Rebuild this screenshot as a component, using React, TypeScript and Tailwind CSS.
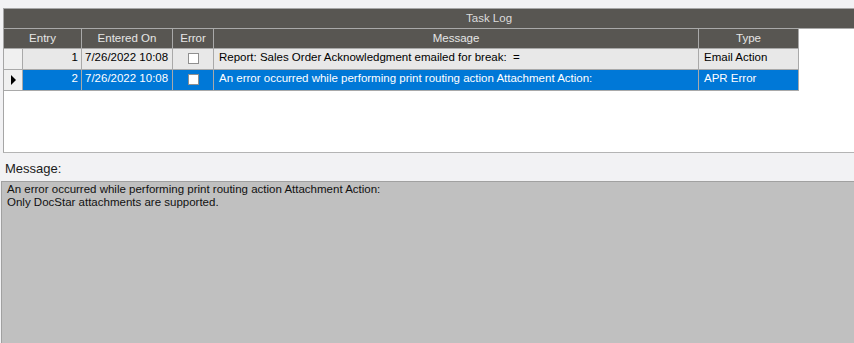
import React from "react";

type Row = {
  entry: number;
  enteredOn: string;
  error: boolean;
  message: string;
  type: string;
};

const rows: Row[] = [
  {
    entry: 1,
    enteredOn: "7/26/2022 10:08",
    error: false,
    message: "Report: Sales Order Acknowledgment emailed for break:  =",
    type: "Email Action",
  },
  {
    entry: 2,
    enteredOn: "7/26/2022 10:08",
    error: false,
    message: "An error occurred while performing print routing action Attachment Action:",
    type: "APR Error",
  },
];

const font = { fontFamily: '"Liberation Sans", Arial, sans-serif' };

export default function App() {
  const selected = 1;

  return (
    <div
      className="w-[854px] h-[343px] overflow-hidden bg-[#f2f2f4] text-[11.5px] text-black flex flex-col"
      style={font}
    >
      {/* Grid panel */}
      <div className="mt-[8px] ml-[3px] h-[145px] shrink-0 bg-white border-t border-l border-b border-[#a6a6a6] border-b-[#b4b4b4] flex flex-col">
        {/* Task Log caption */}
        <div className="h-[20px] shrink-0 bg-[#585652] text-[#dcdcdc] leading-[19px] pl-[462px] border-b border-[#a9a9a9]">
          Task Log
        </div>

        {/* Column headers */}
        <div className="flex shrink-0 h-[20px] w-[795px] bg-[#585652] text-[#e6e6e6] leading-[19px] border-b border-[#a9a9a9] whitespace-nowrap">
          <div className="w-[78px] text-center border-r border-[#a9a9a9]">Entry</div>
          <div className="w-[91px] text-center border-r border-[#a9a9a9]">Entered On</div>
          <div className="w-[41px] text-center border-r border-[#a9a9a9]">Error</div>
          <div className="w-[485px] text-center border-r border-[#a9a9a9]">Message</div>
          <div className="w-[100px] text-center border-r border-[#a9a9a9]">Type</div>
        </div>

        {/* Rows */}
        {rows.map((r, i) => {
          const sel = i === selected;
          const cell = sel ? "bg-[#0078d7] text-white" : "bg-[#e8e8e8] text-black";
          return (
            <div
              key={r.entry}
              className="flex shrink-0 h-[21px] w-[795px] leading-[15px] border-b border-[#a9a9a9] whitespace-nowrap"
            >
              <div className="w-[19px] bg-[#f0f0f0] border-r border-[#a9a9a9] flex items-center pl-[7px]">
                {sel && (
                  <div className="w-0 h-0 border-y-[5px] border-y-transparent border-l-[5px] border-l-black" />
                )}
              </div>
              <div className={`w-[59px] text-right pr-[3px] pt-[1px] border-r border-[#a9a9a9] ${cell}`}>
                {r.entry}
              </div>
              <div className={`w-[91px] pl-[3px] pt-[1px] border-r border-[#a9a9a9] ${cell}`}>
                {r.enteredOn}
              </div>
              <div className={`w-[41px] flex justify-center pt-[4px] border-r border-[#a9a9a9] ${cell}`}>
                <div className="w-[11px] h-[11px] bg-white border border-[#8f8f8f]" />
              </div>
              <div className={`w-[485px] pl-[5px] pt-[1px] whitespace-pre border-r border-[#a9a9a9] ${cell}`}>
                {r.message}
              </div>
              <div className={`w-[100px] pl-[5px] pt-[1px] border-r border-[#a9a9a9] ${cell}`}>
                {r.type}
              </div>
            </div>
          );
        })}
      </div>

      {/* Message label */}
      <div className="h-[28px] shrink-0 pl-[5px] pt-[8px] leading-[15px] text-[13px] text-[#1a1a1a]">
        Message:
      </div>

      {/* Message body */}
      <div className="flex-1 ml-[1px] bg-[#c0c0c0] border-t border-l border-[#a0a0a0] pl-[5px] pt-[1px] leading-[13px] text-[11.5px] text-[#111]">
        <div>An error occurred while performing print routing action Attachment Action:</div>
        <div>Only DocStar attachments are supported.</div>
      </div>
    </div>
  );
}
